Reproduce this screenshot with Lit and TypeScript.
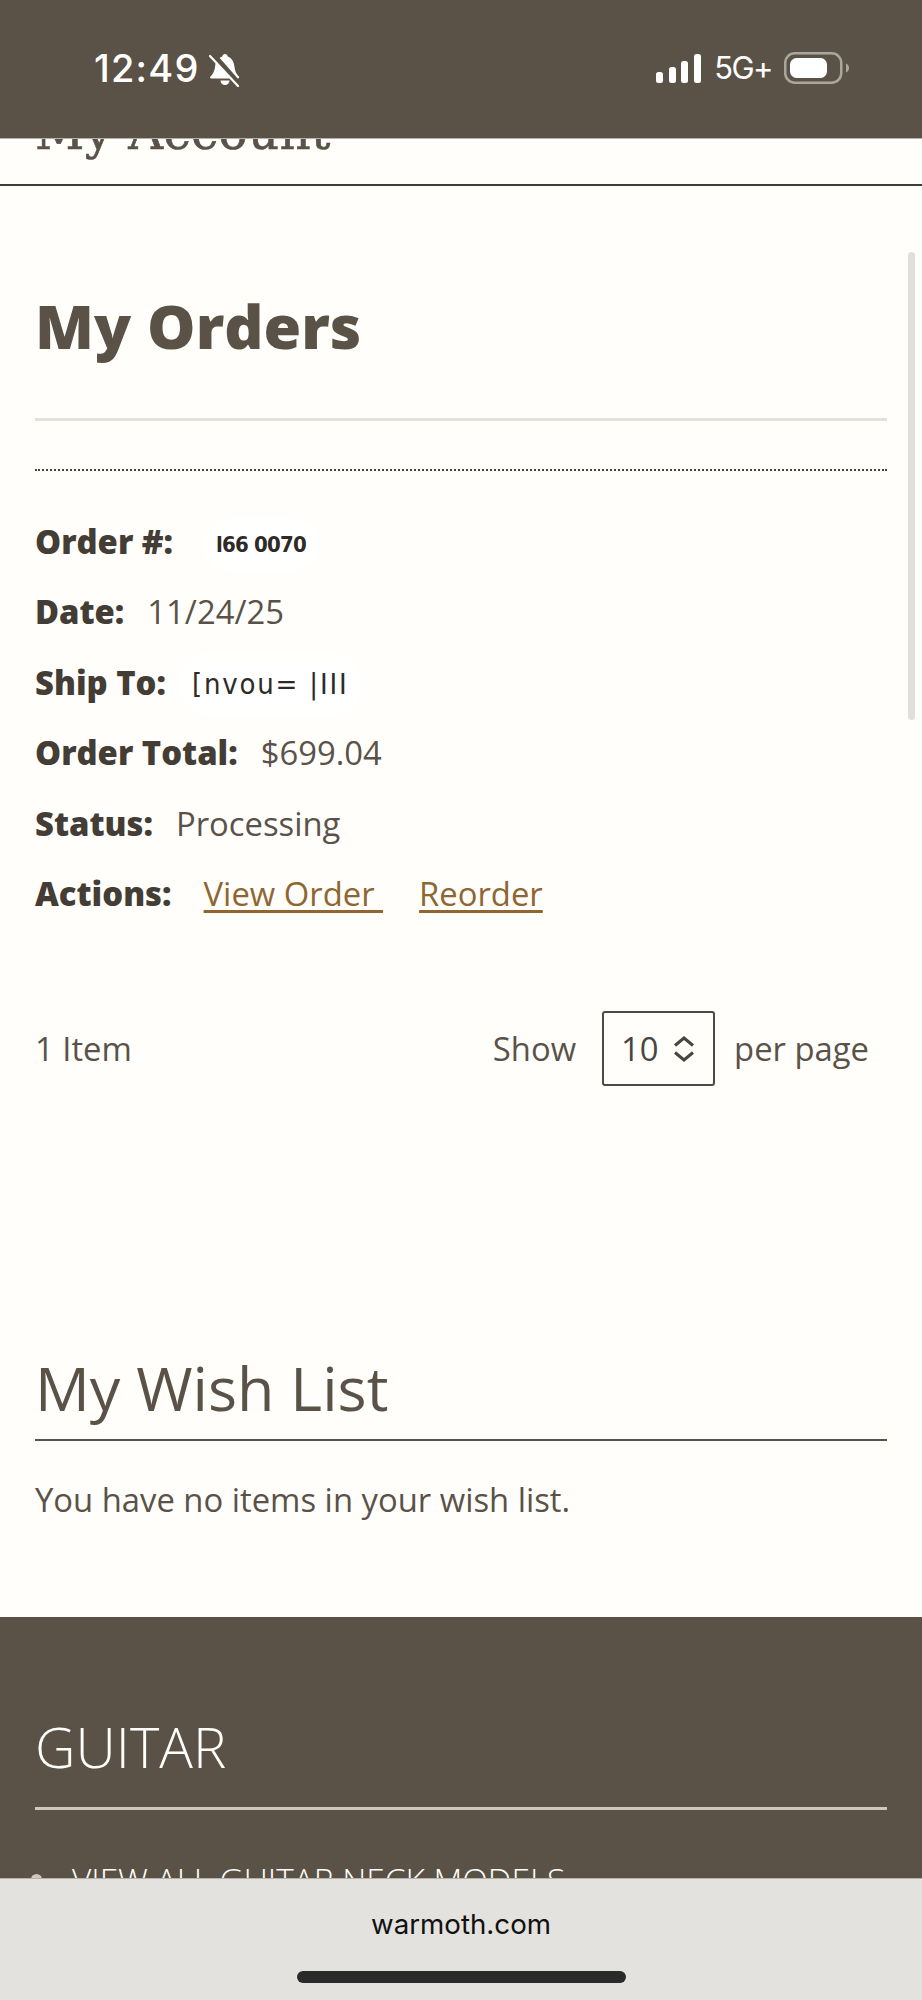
import { LitElement, html, css } from "lit";
import { customElement } from "lit/decorators.js";

@customElement("app-root")
export class AppRoot extends LitElement {
  static styles = css`
    :host { display: block; width: 922px; height: 2000px; position: relative; overflow: hidden; background: #fffefb; font-family: "Open Sans", sans-serif; color: #5a5249; }
    * { box-sizing: border-box; }
    .status { height: 139px; background: #5a5246; color: #fff; border-bottom: 1px solid #b5b0a8; display: flex; align-items: flex-start; justify-content: space-between; padding: 45px 72px 0 94px; font-family: "Inter", sans-serif; }
    .time { font-size: 38px; font-weight: 500; letter-spacing: 1.2px; line-height: 46px; display: flex; align-items: center; gap: 9px; }
    .time svg { display: block; margin-top: 3px; }
    .sys { display: flex; align-items: center; height: 46px; gap: 0; }
    .signal { display: block; margin-right: 13px; }
    .net { font-size: 31px; letter-spacing: -1.600px; line-height: 46px; margin-right: 12px; }
    .battery { display: block; }

    .acct { height: 47px; border-bottom: 2px solid #3f3b36; overflow: hidden; padding: 0 35px; }
    .acct span { display: block; margin-top: -37px; font: 48.300px/60px "DejaVu Serif", serif; letter-spacing: 0.4px; color: #5a5249; white-space: nowrap; -webkit-text-stroke: 0.6px #5a5249; }

    .main { padding: 0 35px; }
    h1 { margin: 0; padding-top: 100px; font-size: 61px; font-weight: 800; line-height: 80px; color: #5a5246; }
    .rule { height: 3px; background: #e3e1dc; margin-top: 52px; }
    .dots { border-top: 2px dotted #46423c; margin-top: 48px; height: 0; }
    .info { padding-top: 35px; }
    .row { height: 70.500px; display: flex; align-items: center; font-size: 32.800px; color: #5a5249; gap: 23px; white-space: nowrap; }
    .row b { font-weight: 800; color: #433d35; }
    .row a { color: #8f6632; text-decoration: underline; text-decoration-thickness: 3px; text-underline-offset: 4px; white-space: pre; }
    .links { display: flex; gap: 36px; margin-left: 9px; }
    .masked { background: #fff; box-shadow: 0 0 16px 14px #fff; border-radius: 14px; color: #2e2b27; line-height: 1; }
    .m-order { font: 700 22px "DejaVu Sans Condensed", "DejaVu Sans", sans-serif; letter-spacing: -0.800px; margin-left: 20px; margin-top: 6px; }
    .m-ship { font: 400 29px "DejaVu Sans Condensed", "DejaVu Sans", sans-serif; letter-spacing: 1.800px; margin-left: 3px; margin-top: 4px; }

    .pager { display: flex; align-items: center; justify-content: space-between; margin-top: 82px; padding-right: 18px; font-size: 32.800px; color: #5a5249; }
    .limiter { display: flex; align-items: center; }
    .select { width: 113px; height: 75px; border: 2px solid #4f4a42; border-radius: 3px; margin: 0 19px 0 26px; display: flex; align-items: center; justify-content: space-between; padding: 0 18px 0 17px; color: #4a453e; }
    .select svg { display: block; }

    .wish { padding-top: 261px; }
    h2 { margin: 0; font-size: 61px; font-weight: 400; line-height: 82px; color: #5a5246; }
    .wish-rule { height: 2px; background: #5a5246; margin-top: 9.500px; }
    .wish p { margin: 0; padding-top: 37px; font-size: 32.800px; line-height: 44px; color: #5a5249; }

    .footer { height: 261px; overflow: hidden; background: #5a5246; margin-top: 95px; padding: 93px 35px 0; color: #fff; }
    .footer h3 { margin: 0; font-size: 56px; font-weight: 300; line-height: 72px; color: #fffefb; }
    .footer-rule { height: 3px; background: #cfc8bc; margin-top: 25px; }
    .footer ul { margin: 48px 0 0; padding: 0 0 0 37px; list-style: none; }
    .footer li { position: relative; font-size: 33.400px; font-weight: 300; line-height: 44px; white-space: nowrap; color: #fffefb; }
    .footer li::before { content: ""; position: absolute; left: -41px; top: 16px; width: 11px; height: 11px; border-radius: 50%; background: #cfc8bc; }

    .browser { height: 124px; background: #e3e2de; border-top: 1px solid #b5b0a8; display: flex; flex-direction: column; align-items: center; padding-top: 27px; font-family: "Inter", sans-serif; color: #111; }
    .url { font-size: 27.700px; line-height: 36px; }
    .home { width: 329px; height: 12px; border-radius: 6px; background: #2a2a2a; margin-top: 29px; }

    .scroll { position: absolute; left: 908px; top: 252px; width: 7px; height: 468px; border-radius: 4px; background: #e0dfdc; }
  `;

  render() {
    return html`
      <div class="status">
        <div class="time">
          12:49
          <svg width="32" height="34" viewBox="0 0 32 34" aria-hidden="true">
            <path fill="#fff" d="M16 1c-1.500 0-2.500 1-2.700 2.500C8.500 5 6.500 9 6 14c-.4 4-2 7-4.500 9.500-.8.8-.3 2 .8 2H29c1.200 0 1.600-1.200.8-2-2.300-2.300-4-5.500-4.300-9.500C25 9 23 5 18.700 3.500 18.500 2 17.500 1 16 1zM11.500 27.500a4.500 4.500 0 0 0 9 0z"/>
            <path stroke="#5a5246" stroke-width="5" d="M3 0l28 32"/>
            <path stroke="#fff" stroke-width="2.200" stroke-linecap="round" d="M1 3l28 30"/>
          </svg>
        </div>
        <div class="sys">
          <svg class="signal" width="45" height="30" viewBox="0 0 45 30" aria-hidden="true">
            <rect x="0" y="19" width="7" height="11" rx="2.500" fill="#fff"/>
            <rect x="13" y="14" width="7" height="16" rx="2.500" fill="#fff"/>
            <rect x="25" y="8" width="7" height="22" rx="2.500" fill="#fff"/>
            <rect x="38" y="1" width="7" height="29" rx="2.500" fill="#fff"/>
          </svg>
          <span class="net">5G+</span>
          <svg class="battery" width="66" height="32" viewBox="0 0 66 32" aria-hidden="true">
            <rect x="1.250" y="1.250" width="56" height="29.500" rx="9.500" fill="none" stroke="#aaa69e" stroke-width="2.500"/>
            <rect x="6" y="6" width="37" height="20" rx="6.500" fill="#fff"/>
            <path fill="#aaa69e" d="M62 11.500c2 .8 3 2.500 3 4.500s-1 3.700-3 4.500z"/>
          </svg>
        </div>
      </div>
      <div class="acct"><span>My Account</span></div>
      <div class="main">
        <h1>My Orders</h1>
        <div class="rule"></div>
        <div class="dots"></div>
        <div class="info">
          <div class="row"><b>Order #:</b><span class="masked m-order">l66 0070</span></div>
          <div class="row"><b>Date:</b><span>11/24/25</span></div>
          <div class="row"><b>Ship To:</b><span class="masked m-ship">[nvou= |III</span></div>
          <div class="row"><b>Order Total:</b><span>$699.04</span></div>
          <div class="row"><b>Status:</b><span>Processing</span></div>
          <div class="row"><b>Actions:</b><span class="links"><a>View Order </a><a>Reorder</a></span></div>
        </div>
        <div class="pager">
          <span>1 Item</span>
          <div class="limiter">
            <span>Show</span>
            <div class="select">
              <span>10</span>
              <svg width="22" height="26" viewBox="0 0 22 26" fill="none" stroke="#4a453e" stroke-width="3" aria-hidden="true">
                <path d="M2 9.500l9-7.500 9 7.500M2 16.500l9 7.500 9-7.500"/>
              </svg>
            </div>
            <span>per page</span>
          </div>
        </div>
        <div class="wish">
          <h2>My Wish List</h2>
          <div class="wish-rule"></div>
          <p>You have no items in your wish list.</p>
        </div>
      </div>
      <div class="footer">
        <h3>GUITAR</h3>
        <div class="footer-rule"></div>
        <ul><li>VIEW ALL GUITAR NECK MODELS</li></ul>
      </div>
      <div class="browser">
        <div class="url">warmoth.com</div>
        <div class="home"></div>
      </div>
      <div class="scroll"></div>
    `;
  }
}
